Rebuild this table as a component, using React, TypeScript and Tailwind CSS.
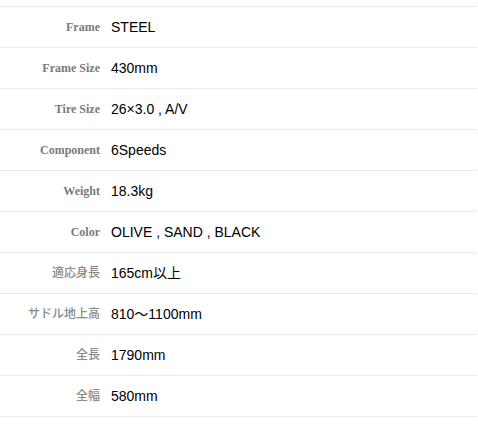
import React from "react";

const rows: [string, string, boolean][] = [
  ["Frame", "STEEL", false],
  ["Frame Size", "430mm", false],
  ["Tire Size", "26×3.0 , A/V", false],
  ["Component", "6Speeds", false],
  ["Weight", "18.3kg", false],
  ["Color", "OLIVE , SAND , BLACK", false],
  ["適応身長", "165cm以上", true],
  ["サドル地上高", "810～1100mm", true],
  ["全長", "1790mm", true],
  ["全幅", "580mm", true],
];

export default function App() {
  return (
    <div className="w-[478px] h-[424px] bg-white pt-[6px]">
      <div className="w-[477px] border-b border-[#ebebeb]">
        {rows.map(([k, v, cjk]) => (
          <div key={k} className="flex items-center h-[41px] border-t border-[#ebebeb]">
            <div
              className={
                cjk
                  ? "w-[100px] text-right text-[12px] font-medium text-[#8a8a8a]"
                  : "w-[100px] text-right text-[12px] font-bold text-[#7a7a7a]"
              }
              style={{ fontFamily: '"Liberation Serif", "Noto Sans CJK JP", serif' }}
            >
              {k}
            </div>
            <div
              className="pl-[11px] text-[14px] text-black"
              style={{ fontFamily: '"Liberation Sans", "Noto Sans CJK JP", sans-serif' }}
            >
              {v}
            </div>
          </div>
        ))}
      </div>
    </div>
  );
}
